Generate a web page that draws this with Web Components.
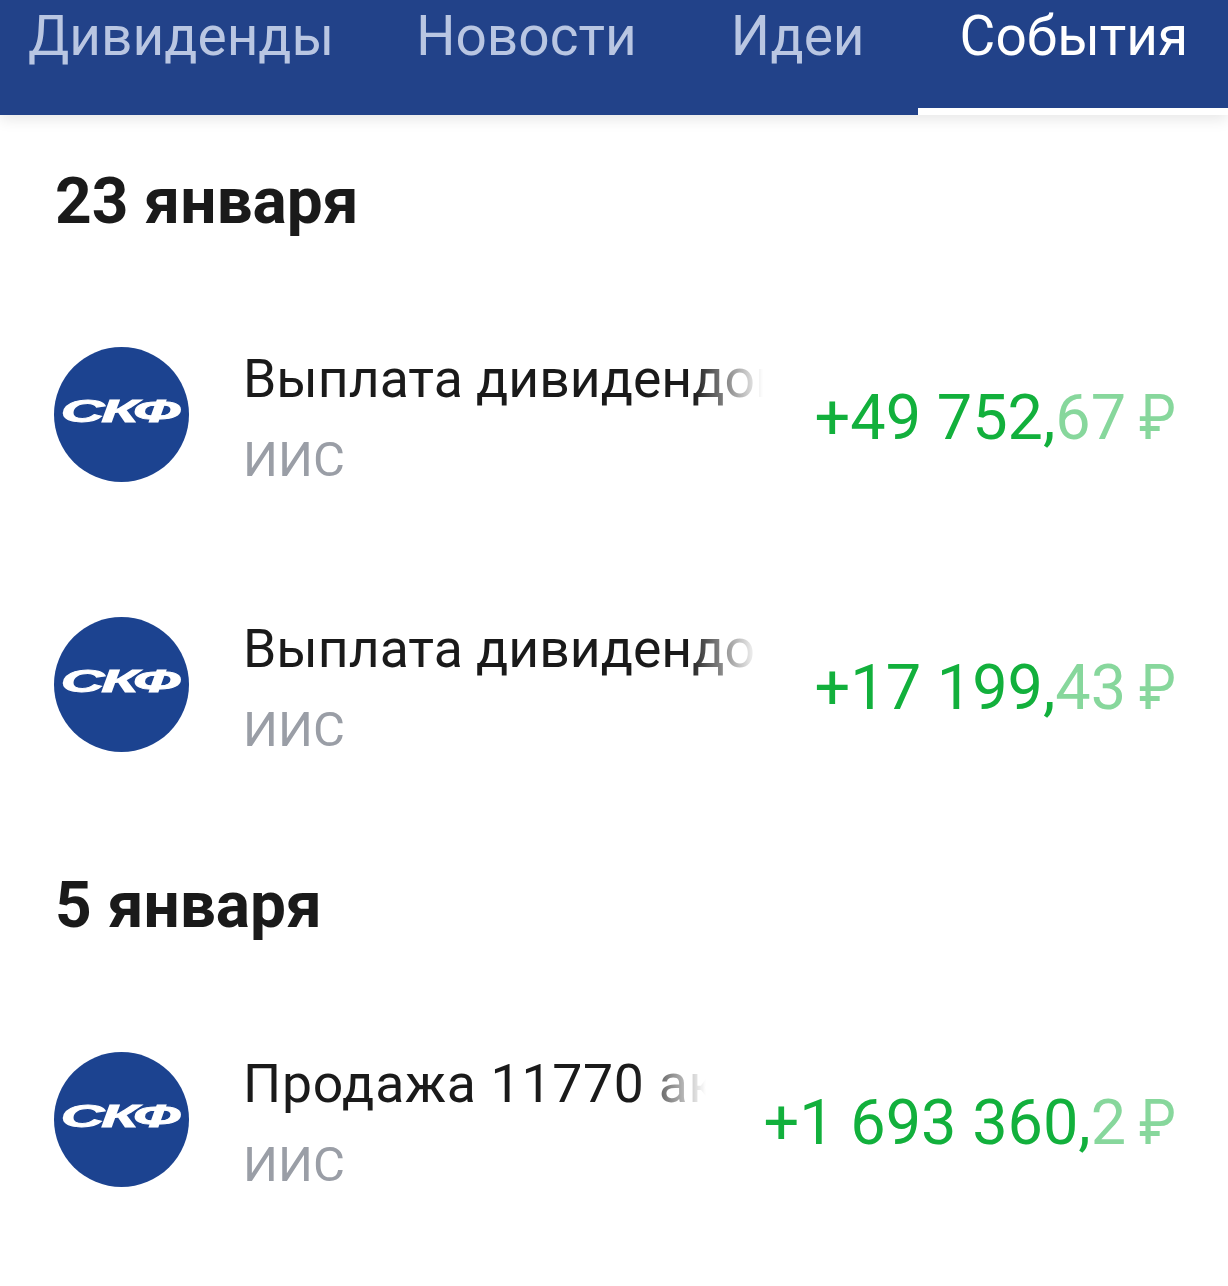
<!doctype html>
<html lang="ru">
<head>
<meta charset="utf-8">
<style>
  html, body { margin: 0; background: #fff; overflow: hidden; }
  body { font-family: "Roboto", "Liberation Sans", sans-serif; color: #1a1a1a; }
</style>
</head>
<body>
<tab-bar>
  <tab-item style="--gap: 82px">Дивиденды</tab-item>
  <tab-item style="--gap: 94px">Новости</tab-item>
  <tab-item style="--gap: 95px">Идеи</tab-item>
  <tab-item active>События</tab-item>
</tab-bar>

<date-title>23 января</date-title>
<event-row style="--fade-gap: 52px" title="Выплата дивидендов" sub="ИИС" whole="+49 752," frac="67"></event-row>
<event-row style="--fade-gap: 57px" title="Выплата дивидендов" sub="ИИС" whole="+17 199," frac="43"></event-row>

<date-title style="--h: 165px">5 января</date-title>
<event-row style="--fade-gap: 58px; --title-spacing: 0.75px" title="Продажа 11770 акций" sub="ИИС" whole="+1 693 360," frac="2"></event-row>

<script>
// tabs
class TabBar extends HTMLElement {
  constructor() {
    super();
    this.attachShadow({ mode: 'open' });
    this.shadowRoot.innerHTML = `
      <style>
        :host {
          display: flex;
          height: 115px;
          padding-left: 28px;
          box-sizing: border-box;
          background: #224289;
          box-shadow: 0 4px 14px rgba(0, 0, 0, 0.1);
          position: relative;
        }
      </style>
      <slot></slot>
    `;
  }
}

class TabItem extends HTMLElement {
  constructor() {
    super();
    this.attachShadow({ mode: 'open' });
    this.shadowRoot.innerHTML = `
      <style>
        :host {
          display: block;
          height: 115px;
          box-sizing: border-box;
          margin-right: var(--gap, 98px);
          padding-top: 6px;
          font-size: 55px;
          line-height: 60px;
          white-space: nowrap;
          color: #b9c6e2;
        }
        :host([active]) {
          flex: 1;
          margin: 0 0 0 -42px;
          padding-left: 42px;
          color: #fff;
          border-bottom: 7px solid #fff;
        }
      </style>
      <slot></slot>
    `;
  }
}

class DateTitle extends HTMLElement {
  constructor() {
    super();
    this.attachShadow({ mode: 'open' });
    this.shadowRoot.innerHTML = `
      <style>
        :host {
          display: block;
          height: var(--h, 164px);
          box-sizing: border-box;
          padding: 52px 0 0 55px;
          font-size: 64px;
          line-height: 70px;
          font-weight: 700;
          color: #1a1a1a;
        }
      </style>
      <slot></slot>
    `;
  }
}

class CompanyLogo extends HTMLElement {
  constructor() {
    super();
    this.attachShadow({ mode: 'open' });
    this.shadowRoot.innerHTML = `
      <style>
        :host {
          display: flex;
          flex: none;
          width: 135px;
          height: 135px;
          border-radius: 50%;
          background: #1c4390;
          align-items: center;
          justify-content: center;
          overflow: hidden;
        }
        span {
          display: block;
          margin: -6px 4px 0 0;
          font: italic 700 32px/36px "Liberation Sans", sans-serif;
          color: #fff;
          -webkit-text-stroke: 1px #fff;
          transform: scaleX(1.88);
          letter-spacing: -1.5px;
        }
      </style>
      <span>СКФ</span>
    `;
  }
}

class EventRow extends HTMLElement {
  constructor() {
    super();
    this.attachShadow({ mode: 'open' });
    const a = (n) => this.getAttribute(n);
    this.shadowRoot.innerHTML = `
      <style>
        :host {
          display: flex;
          align-items: center;
          height: 270px;
          box-sizing: border-box;
          padding: 0 52px 0 54px;
        }
        .text {
          flex: 1;
          min-width: 0;
          margin: 0 var(--fade-gap, 58px) 0 54px;
          padding: 8px 0 0;
        }
        /* long titles fade out towards the amount */
        .title {
          font-size: 53.5px;
          line-height: 64px;
          letter-spacing: var(--title-spacing, 0);
          color: #1a1a1a;
          overflow: hidden;
          white-space: nowrap;
          -webkit-mask-image: linear-gradient(to left, transparent 0, #000 70px);
          mask-image: linear-gradient(to left, transparent 0, #000 70px);
        }
        .sub {
          margin-top: 20px;
          font-size: 49px;
          line-height: 58px;
          color: #9a9ea6;
        }
        .amount {
          flex: none;
          margin-top: 8px;
          font-size: 63px;
          line-height: 74px;
          white-space: nowrap;
          color: #12b03c;
        }
        .amount span { opacity: 0.5; }
        .rub {
          display: inline-block;
          margin-left: 8px;
          transform: scaleX(0.88);
          transform-origin: right;
        }
      </style>
      <company-logo></company-logo>
      <div class="text">
        <div class="title">${a('title')}</div>
        <div class="sub">${a('sub')}</div>
      </div>
      <div class="amount">${a('whole')}<span>${a('frac')}</span><span class="rub">₽</span></div>
    `;
  }
}

customElements.define('tab-bar', TabBar);
customElements.define('tab-item', TabItem);
customElements.define('date-title', DateTitle);
customElements.define('company-logo', CompanyLogo);
customElements.define('event-row', EventRow);
</script>
</body>
</html>
